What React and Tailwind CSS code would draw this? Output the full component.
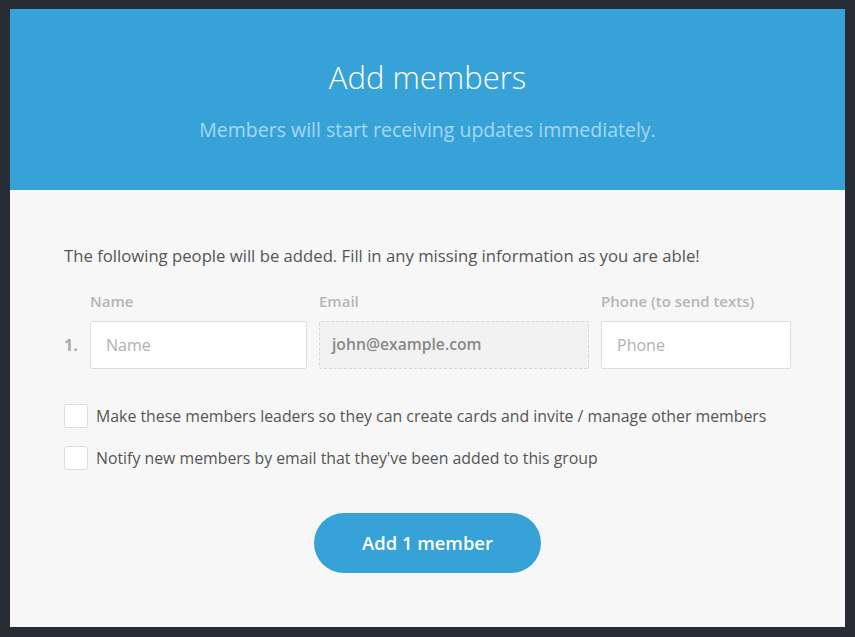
import React from "react";

const Label = ({ children }) => (
  <div className="mb-[10px] text-[15px] leading-[20px] font-semibold text-[#b5b5b5]">
    {children}
  </div>
);

const AddMembers = () => {
  return (
    <div className="h-[637px] w-full bg-[#272c35] pt-[9px] pl-[10px] font-['Open_Sans',sans-serif]">
      <div className="w-[835px] bg-[#f7f7f7]">
        <div className="h-[181px] bg-[#36a2d7] flex flex-col items-center">
          <h1 className="mt-[48px] text-[31px] leading-[40px] font-light text-white">
            Add members
          </h1>
          <p className="mt-[19px] text-[19.5px] leading-[28px] text-[#a6d8f3]">
            Members will start receiving updates immediately.
          </p>
        </div>

        <div className="pt-[54px] pb-[54px] pl-[54px] pr-[54px] text-[#555]">
          <p className="text-[16.7px] leading-[24px]">
            The following people will be added. Fill in any missing information as you are able!
          </p>

          <div className="mt-[23px] flex items-end">
            <div className="w-[26px] h-[48px] flex items-center text-[16px] font-bold text-[#aaa]">1.</div>
            <div className="flex gap-[12px]">
              <div className="w-[217px]">
                <Label>Name</Label>
                <input
                  type="text"
                  placeholder="Name"
                  className="w-full h-[48px] bg-white border border-[#dedede] rounded-[2px] px-[15px] text-[16px] placeholder:text-[#b0b0b0] outline-none"
                />
              </div>
              <div className="w-[270px]">
                <Label>Email</Label>
                <div className="h-[48px] bg-[#f2f2f2] border border-dashed border-[#d8d8d8] rounded-[2px] px-[12px] flex items-center text-[15.7px] font-semibold text-[#888]">
                  john@example.com
                </div>
              </div>
              <div className="w-[190px]">
                <Label>Phone (to send texts)</Label>
                <input
                  type="text"
                  placeholder="Phone"
                  className="w-full h-[48px] bg-white border border-[#dedede] rounded-[2px] px-[15px] text-[16px] placeholder:text-[#b0b0b0] outline-none"
                />
              </div>
            </div>
          </div>

          <div className="mt-[35px] flex flex-col gap-[18px]">
            <label className="flex items-center gap-[8px] text-[15.85px] leading-[24px]">
              <span className="w-[24px] h-[24px] bg-white border border-[#dedede] rounded-[3px]"></span>
              Make these members leaders so they can create cards and invite / manage other members
            </label>
            <label className="flex items-center gap-[8px] text-[15.85px] leading-[24px]">
              <span className="w-[24px] h-[24px] bg-white border border-[#dedede] rounded-[3px]"></span>
              Notify new members by email that they've been added to this group
            </label>
          </div>

          <div className="mt-[43px] flex justify-center">
            <button className="w-[227px] h-[60px] rounded-full bg-[#36a2d7] text-white text-[18.4px] font-semibold">
              Add 1 member
            </button>
          </div>
        </div>
      </div>
    </div>
  );
};

export default function App() {
  return <AddMembers />;
}
